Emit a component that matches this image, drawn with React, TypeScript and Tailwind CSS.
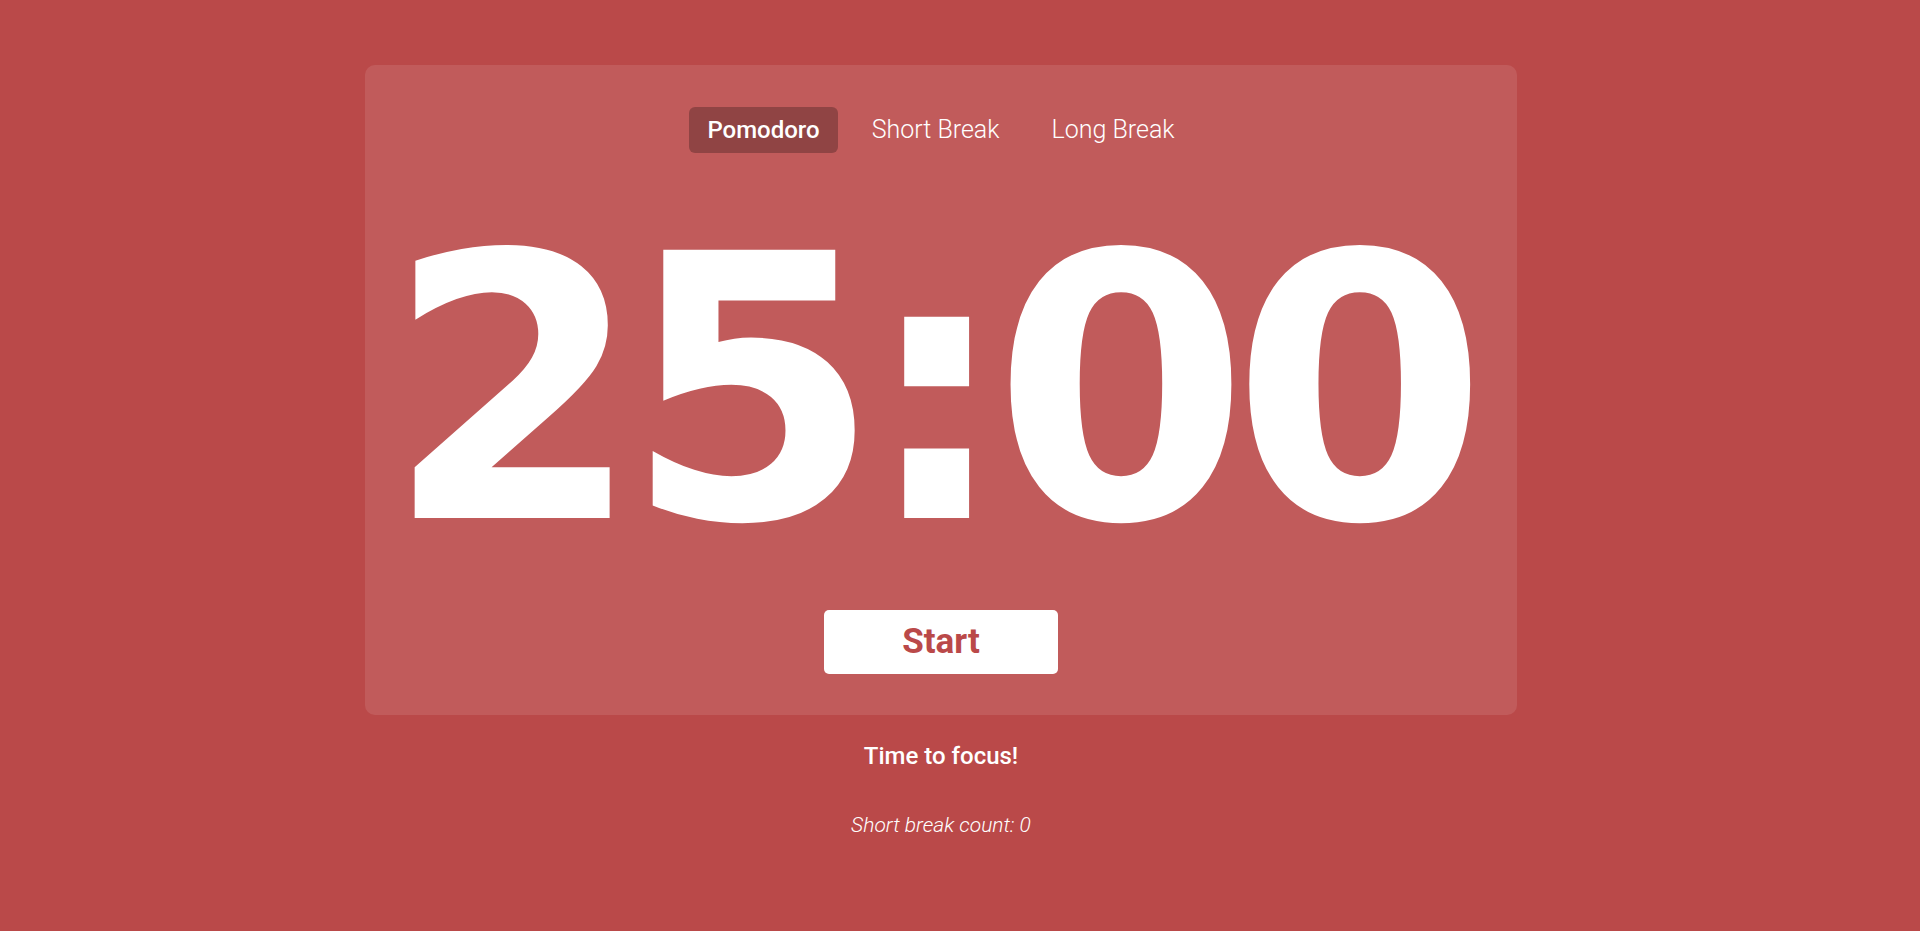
const modes = ['Pomodoro', 'Short Break', 'Long Break'];

export default function App() {
  const active = 'Pomodoro';

  return (
    <div className="min-h-screen bg-[#ba4949] font-['Roboto',sans-serif] text-white">
      <div className="flex flex-col items-center pt-[65px] pr-[38px]">
        {/* Timer card */}
        <section className="flex w-[1152px] flex-col items-center rounded-[10px] bg-white/10 pt-[42px] pb-[41px]">
          <nav className="flex items-center gap-4">
            {modes.map((m) => (
              <button
                key={m}
                className={`h-[46px] rounded-[6px] px-[18px] ${
                  m === active ? 'bg-black/25 text-[24px] font-medium' : 'text-[25px] font-light'
                }`}
              >
                {m}
              </button>
            ))}
          </nav>

          <div className="mt-[54px] mr-[26px] h-[369px] font-['DejaVu_Sans',sans-serif] text-[368px] font-bold leading-none tracking-[-0.047em]">
            25:00
          </div>

          <button className="mt-[34px] h-[64px] w-[234px] rounded-[5px] bg-white text-[35px] font-bold text-[#ba4949]">
            Start
          </button>
        </section>

        <p className="mt-[27px] text-[24px] leading-[28px] font-medium">Time to focus!</p>
        <p className="mt-[43px] text-[21px] leading-[24px] font-light italic">Short break count: 0</p>
      </div>
    </div>
  );
}
